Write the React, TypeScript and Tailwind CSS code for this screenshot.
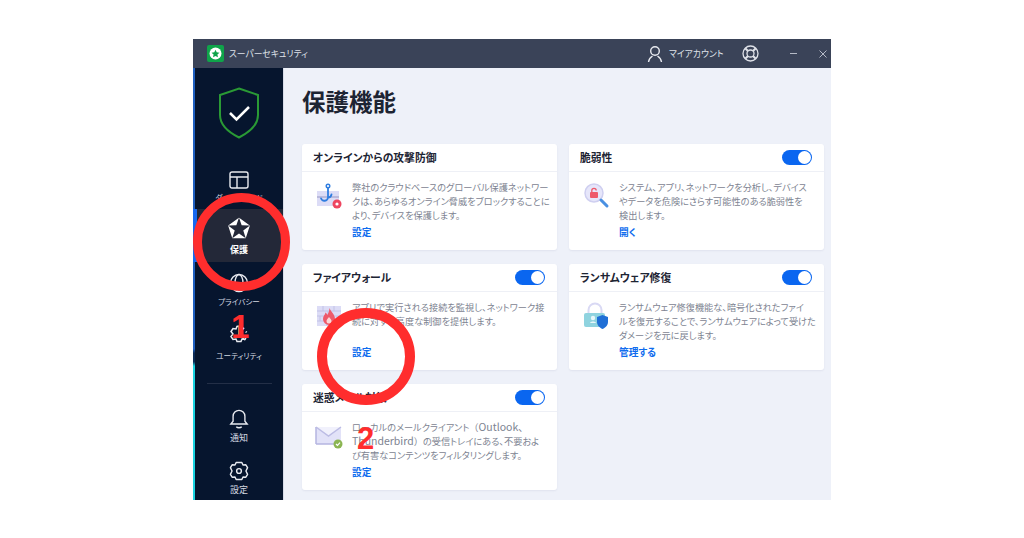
import type { ReactNode } from "react";

const HookIcon = () => (
  <svg width="28" height="28" viewBox="0 0 28 28" fill="none">
    <rect x="2" y="9" width="22" height="15" fill="#dcdcf6" />
    <path d="M2 15h22" stroke="#b9b9dc" strokeWidth="2" />
    <circle cx="13" cy="4" r="1.8" stroke="#2f7de0" strokeWidth="1.4" />
    <path d="M13 6v9.5a3.6 3.6 0 0 1-7 .8M13 15.500a3.600 3.600 0 0 0 3.500-3" stroke="#2f7de0" strokeWidth="1.8" strokeLinecap="round" />
    <circle cx="22" cy="22" r="4.500" fill="#ee4560" />
    <circle cx="22" cy="22" r="1.600" fill="#fff" />
  </svg>
);

const FireIcon = () => (
  <svg width="28" height="28" viewBox="0 0 28 28" fill="none">
    <rect x="2" y="4" width="24" height="20" fill="#dcdcf6" />
    <path d="M2 9h24M2 14h24M2 19h24M8 4v5M19 4v5M13 9v5M5 14v5M22 14v5M12 19v5" stroke="#c2c2e6" strokeWidth="1" />
    <path d="M14.500 6c1 3.500 5.500 6 5.500 11a6 6 0 0 1-12 0c0-3 2-4 2.500-6.500 1 .8 1.500 1.500 1.800 2.500C13.500 11 14.500 8.500 14.500 6Z" fill="#ee5a6b" />
    <path d="M14 15c1 1.500 2.500 2.500 2.500 4a2.500 2.500 0 0 1-5 0c0-1.500 1.500-2.500 2.500-4Z" fill="#fbd7d7" />
  </svg>
);

const MailIcon = () => (
  <svg width="28" height="28" viewBox="0 0 28 28" fill="none">
    <path d="M1 5h25v17H1z" fill="#e2e2f8" />
    <path d="M1 22h20" stroke="#b5b5e0" strokeWidth="1.500" />
    <path d="M1 5v17" stroke="#b5b5e0" strokeWidth="1.500" />
    <path d="M1 5l12.500 9L26 5" stroke="#bcbce4" strokeWidth="1.500" fill="#f1f1fc" />
    <circle cx="23" cy="22" r="4.500" fill="#8bb552" />
    <path d="M21 22l1.500 1.500 2.500-2.800" stroke="#fff" strokeWidth="1.200" />
  </svg>
);

const LensIcon = () => (
  <svg width="28" height="28" viewBox="0 0 28 28" fill="none">
    <circle cx="12" cy="11" r="9" fill="#e6e6fa" stroke="#cfcff0" strokeWidth="1.500" />
    <path d="M19 18l6 6" stroke="#4a90e2" strokeWidth="3" strokeLinecap="round" />
    <rect x="8" y="10" width="8" height="6" rx="1" fill="#ee5a6b" />
    <path d="M9.800 10V8.500a2.200 2.200 0 0 1 4.400 0" stroke="#ee5a6b" strokeWidth="1.300" />
  </svg>
);

const LockIcon = () => (
  <svg width="28" height="28" viewBox="0 0 28 28" fill="none">
    <path d="M6.500 11V8a6.500 6.500 0 0 1 13 0v3" stroke="#d9d9f4" strokeWidth="2" />
    <rect x="2" y="11" width="21" height="14" rx="2" fill="#8fd3df" />
    <circle cx="11" cy="16" r="2.200" fill="#e8f7fa" />
    <path d="M8 21c.5-2 5.500-2 6 0Z" fill="#e8f7fa" />
    <path d="M20.500 13l5.500 2v5c0 3.500-2.500 5.500-5.500 7-3-1.500-5.500-3.500-5.500-7v-5Z" fill="#1f6fd6" />
  </svg>
);

function Toggle() {
  return (
    <div className="flex h-[15px] w-[30px] items-center justify-end rounded-full bg-[#0a66f0] pr-[1px]">
      <div className="h-[13px] w-[13px] rounded-full bg-white" />
    </div>
  );
}

function Card({
  title,
  icon,
  link,
  toggle = true,
  children,
}: {
  title: string;
  icon: ReactNode;
  link: string;
  toggle?: boolean;
  children: ReactNode;
}) {
  return (
    <div className="flex h-[106px] flex-col rounded-[3px] bg-white shadow-[0_1px_2px_rgba(60,70,110,0.08)]">
      <div className="flex h-[28px] shrink-0 items-center justify-between border-b border-[#eef0f6] pl-[11px] pr-[12px]">
        <span className="text-[10.800px] font-bold text-[#1d2433]">{title}</span>
        {toggle && <Toggle />}
      </div>
      <div className="flex gap-[9px] pl-[13px] pt-[8px]">
        <div className="mt-[2px] w-[28px] shrink-0">{icon}</div>
        <div className="flex h-[59px] flex-col justify-between">
          <p className="whitespace-nowrap text-[9.200px] leading-[14px] text-[#7d8391]">{children}</p>
          <span className="text-[9.700px] leading-[14px] font-bold text-[#0f6cee]">{link}</span>
        </div>
      </div>
    </div>
  );
}

function NavItem({ icon, label, active = false, className = "", labelClass = "text-[9px]" }: { icon: ReactNode; label: string; active?: boolean; className?: string; labelClass?: string }) {
  return (
    <div className={`flex flex-col items-center justify-end ${active ? "bg-[#232838] font-bold text-white" : "text-[#d5d9e2]"} ${className}`}>
      {icon}
      <span className={`mt-[3px] whitespace-nowrap leading-[12px] ${labelClass}`}>{label}</span>
    </div>
  );
}

export default function App() {
  return (
    <div className="relative h-[538px] w-[1024px] overflow-hidden bg-white pl-[193px] pt-[39px] font-['Noto_Sans_CJK_JP','Noto_Sans',sans-serif] [font-feature-settings:'palt']">
      <div className="flex h-[461px] w-[638px] flex-col">
        {/* title bar */}
        <div className="flex h-[29px] shrink-0 items-center bg-[#3a4358] pl-[14px] pr-[4px] text-[#dfe2e9]">
          <div className="flex h-[17px] w-[17px] items-center justify-center rounded-[2px] bg-[#0fa44a]">
            <svg width="13" height="13" viewBox="0 0 24 24">
              <circle cx="12" cy="12" r="11" fill="#fff" />
              <path d="M12 5l2.200 4.800 5.200.6-3.900 3.500 1.100 5.100L12 16.400 7.400 19l1.100-5.100L4.600 10.400l5.200-.6Z" fill="#0fa44a" />
            </svg>
          </div>
          <span className="ml-[5px] whitespace-nowrap text-[8.800px]">スーパーセキュリティ</span>
          <div className="ml-auto flex items-center">
            <svg width="16" height="18" viewBox="0 0 16 18" fill="none" stroke="#e8eaf0" strokeWidth="1.400">
              <circle cx="8" cy="6" r="4.300" />
              <path d="M1.500 17c.5-3.500 2.500-5 4-6M14.500 17c-.5-3.500-2.500-5-4-6" />
            </svg>
            <span className="ml-[6px] w-[55px] whitespace-nowrap text-[8.800px]">マイアカウント</span>
            <svg className="ml-[18px]" width="17" height="17" viewBox="0 0 17 17" fill="none" stroke="#dfe2e9" strokeWidth="1.300">
              <circle cx="8.500" cy="8.500" r="7.500" />
              <circle cx="8.500" cy="8.500" r="3.500" />
              <path d="M3.200 3.200l2.800 2.800M13.800 3.200L11 6M3.200 13.800L6 11M13.800 13.800L11 11" strokeWidth="2" />
            </svg>
            <div className="ml-[31px] h-[1px] w-[7px] bg-[#b5bac6]" />
            <svg className="ml-[22px]" width="8" height="8" viewBox="0 0 8 8" stroke="#b5bac6" strokeWidth="1">
              <path d="M0.500 0.500l7 7M7.500 0.500l-7 7" />
            </svg>
          </div>
        </div>

        <div className="flex min-h-0 flex-1">
          {/* sidebar */}
          <div className="relative flex w-[91px] shrink-0 border-r border-[#d8dce8] bg-[#06152e]">
            <div className="h-full w-[2px] shrink-0 bg-[linear-gradient(#1f5fc0_0%,#1f5fc0_65%,#0b2a55_66%,#0b2a55_68%,#19d3e0_69%,#19d3e0_100%)]" />
            <div className="flex min-w-0 flex-1 flex-col">
              <div className="flex h-[101px] shrink-0 justify-center pt-[19px]">
                <svg width="42" height="52" viewBox="0 0 42 52" fill="none">
                  <path d="M21 1.500l19 6.500v20c0 10-8 17-19 22.500C10 45 2 38 2 28V8Z" stroke="#2a9a35" strokeWidth="2" />
                  <path d="M12 26l6.500 6.500L31 20" stroke="#fff" strokeWidth="2.500" />
                </svg>
              </div>
              <NavItem
                className="h-[35px]"
                labelClass="text-[7.600px]"
                label="ダッシュボード"
                icon={
                  <svg width="20" height="18" viewBox="0 0 20 18" fill="none" stroke="#e8eaf0" strokeWidth="1.400">
                    <rect x="1" y="1" width="18" height="16" rx="2" />
                    <path d="M1 6h18M8 6v11" />
                  </svg>
                }
              />
              <NavItem
                active
                className="mt-[5px] h-[53px] pb-[6px]"
                label="保護"
                icon={
                  <svg width="24" height="24" viewBox="0 0 24 24">
                    <path d="M12 1.500l10 7.300-3.800 11.700H5.800L2 8.800Z" fill="#fff" stroke="#fff" strokeWidth="1.500" strokeLinejoin="round" />
                    <path d="M12 0.500L14.650 8.360 22.900 8.450 16.280 13.390 18.760 21.300 12 16.500 5.240 21.300 7.720 13.390 1.100 8.450 9.350 8.360Z" fill="#232838" />
                  </svg>
                }
              />
              <NavItem
                className="h-[46px]"
                labelClass="text-[7.600px]"
                label="プライバシー"
                icon={
                  <svg width="20" height="20" viewBox="0 0 20 20" fill="none" stroke="#e8eaf0" strokeWidth="1.400">
                    <circle cx="10" cy="10" r="8.500" />
                    <ellipse cx="10" cy="10" rx="4" ry="8.500" />
                    <path d="M1.500 10h17" />
                  </svg>
                }
              />
              <NavItem
                className="h-[54px]"
                labelClass="text-[7.600px]"
                label="ユーティリティ"
                icon={
                  <svg width="22" height="24" viewBox="0 0 22 24" fill="none" stroke="#e8eaf0" strokeWidth="1.500">
                    <path d="M11 3l-2 .5-1 2.500-3-.5-2 3 2 2.500-2 2.500 2 3 3-.5 1 2.500h4l1-2.500 3 .5 1-2" />
                    <path d="M11 4v8l6 5" />
                    <path d="M15 5l1 1M18 8.500l.5 1M19 13v1" strokeWidth="1.800" />
                  </svg>
                }
              />
              <div className="mx-auto mt-[21px] h-[1px] w-[65px] shrink-0 bg-[#232f47]" />
              <NavItem
                className="mt-[25px] h-[35px]"
                label="通知"
                icon={
                  <svg width="20" height="22" viewBox="0 0 20 22" fill="none" stroke="#e8eaf0" strokeWidth="1.500">
                    <path d="M1 16.500h18l-2.500-3V8a6.500 6.500 0 0 0-13 0v5.500Z" />
                    <path d="M7 19.500c1.500 1.500 4.500 1.500 6 0" />
                  </svg>
                }
              />
              <NavItem
                className="mt-[17px] h-[35px]"
                label="設定"
                icon={
                  <svg width="20" height="21" viewBox="0 0 20 21" fill="none" stroke="#e8eaf0" strokeWidth="1.500">
                    <path d="M7 1.500h6l1.200 2.700 3-.2L19 7l-1.700 3.500L19 14l-1.800 3-3-.2L13 19.500H7l-1.200-2.700-3 .2L1 14l1.700-3.500L1 7l1.800-3 3 .2Z" strokeLinejoin="round" />
                    <circle cx="10" cy="10.500" r="2.500" />
                  </svg>
                }
              />
            </div>
            <div className="absolute left-0 top-[141px] h-[53px] w-[4px] bg-[#1668f0]" />
          </div>

          {/* main */}
          <div className="min-w-0 flex-1 bg-[#eef1f9] pl-[18px] pr-[7px]">
            <h1 className="mt-[18px] h-[58px] text-[23.500px] leading-[30px] font-bold text-[#1d2433]">保護機能</h1>
            <div className="grid grid-cols-[255px_255px] gap-x-[12px] gap-y-[14px]">
              <Card title="オンラインからの攻撃防御" icon={<HookIcon />} link="設定" toggle={false}>
                弊社のクラウドベースのグローバル保護ネットワー
                <br />
                クは、あらゆるオンライン脅威をブロックすることに
                <br />
                より、デバイスを保護します。
              </Card>
              <Card title="脆弱性" icon={<LensIcon />} link="開く">
                システム、アプリ、ネットワークを分析し、デバイス
                <br />
                やデータを危険にさらす可能性のある脆弱性を
                <br />
                検出します。
              </Card>
              <Card title="ファイアウォール" icon={<FireIcon />} link="設定">
                アプリで実行される接続を監視し、ネットワーク接
                <br />
                続に対する高度な制御を提供します。
              </Card>
              <Card title="ランサムウェア修復" icon={<LockIcon />} link="管理する">
                ランサムウェア修復機能な、暗号化されたファイ
                <br />
                ルを復元することで、ランサムウェアによって受けた
                <br />
                ダメージを元に戻します。
              </Card>
              <Card title="迷惑メール対策" icon={<MailIcon />} link="設定">
                ローカルのメールクライアント
                <span className="[font-feature-settings:normal]">（</span>
                <span className="text-[10.500px]">Outlook、</span>
                <br />
                <span className="text-[10.500px]">Thunderbird</span>
                <span className="[font-feature-settings:normal]">）</span>
                の受信トレイにある、不要およ
                <br />
                び有害なコンテンツをフィルタリングします。
              </Card>
            </div>
          </div>
        </div>
      </div>

      {/* annotations drawn over the screenshot */}
      <div className="absolute left-[193px] top-[193px] h-[98px] w-[97px] rounded-full border-[9px] border-[#ff2d2d]" />
      <div className="absolute left-[317px] top-[308px] h-[97px] w-[98px] rounded-full border-[10px] border-[#ff2d2d]" />
      <span className="absolute left-[231px] top-[305px] font-['Liberation_Sans',sans-serif] text-[33px] leading-[44px] font-bold text-[#ff2d2d]">1</span>
      <span className="absolute left-[357px] top-[417px] font-['Liberation_Sans',sans-serif] text-[31px] leading-[44px] font-bold text-[#ff2d2d]">2</span>
    </div>
  );
}
